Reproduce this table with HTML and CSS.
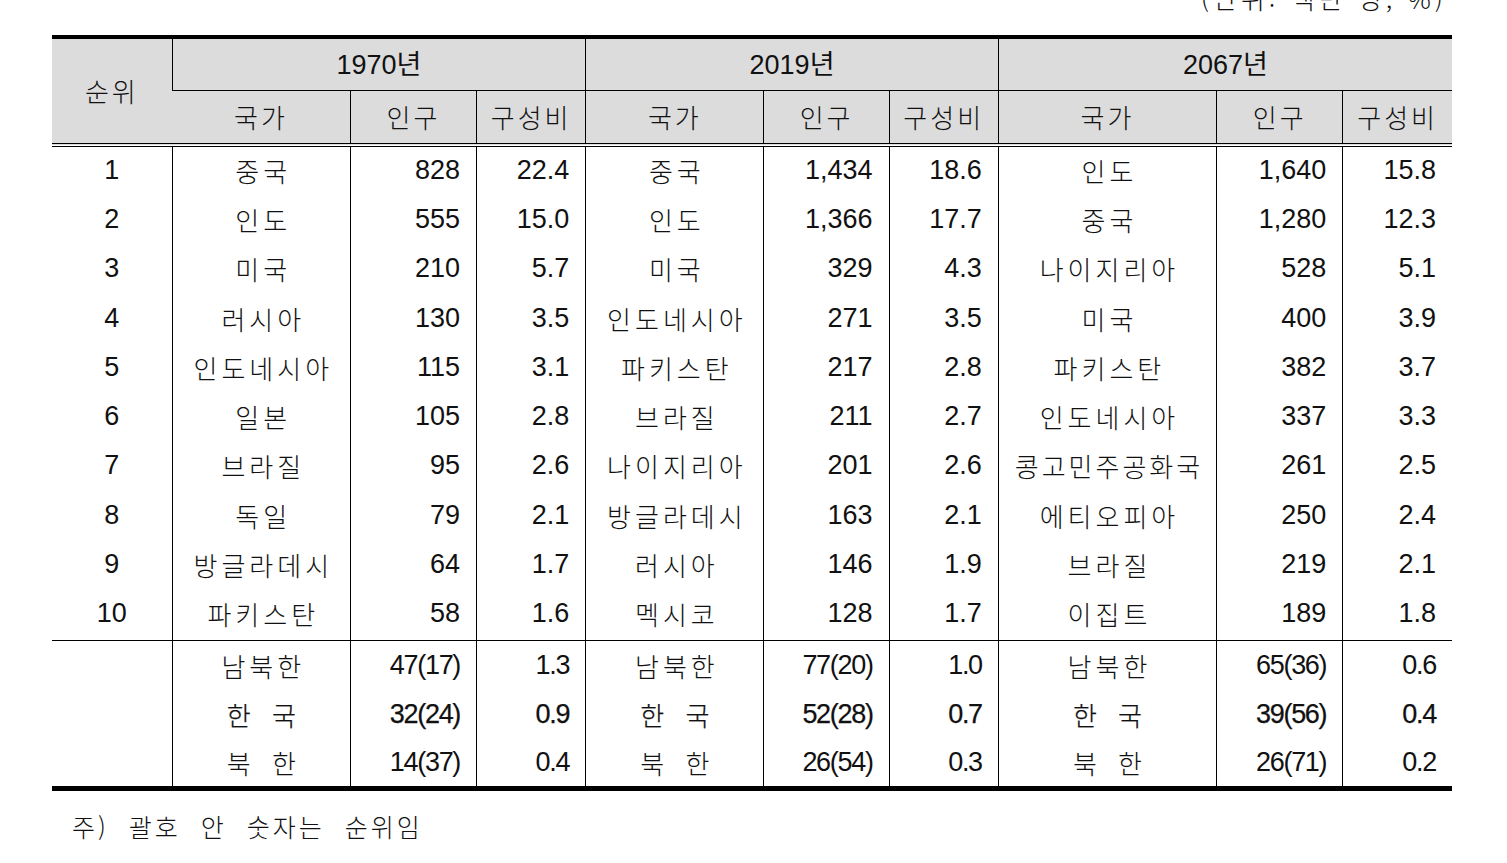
FILE: index.html
```html
<!DOCTYPE html>
<html lang="ko">
<head>
<meta charset="utf-8">
<title>세계 인구 순위</title>
<link rel="stylesheet" href="styles.css">
</head>
<body>
<div class="unit"><span class="unit-text">(단위: 백만 명, %)</span></div>
<table class="pop">
  <colgroup>
    <col class="w-rank"><col class="w-ctry"><col class="w-pop"><col class="w-pct">
    <col class="w-ctry"><col class="w-pop2"><col class="w-pct">
    <col class="w-ctry2"><col class="w-pop"><col class="w-pct">
  </colgroup>
  <thead>
    <tr class="h1">
      <th rowspan="2" class="ko-h">순위</th>
      <th colspan="3">1970년</th>
      <th colspan="3">2019년</th>
      <th colspan="3">2067년</th>
    </tr>
    <tr class="h2">
      <th class="ko-h">국가</th><th class="ko-h">인구</th><th class="ko-h">구성비</th>
      <th class="ko-h">국가</th><th class="ko-h">인구</th><th class="ko-h">구성비</th>
      <th class="ko-h">국가</th><th class="ko-h">인구</th><th class="ko-h">구성비</th>
    </tr>
  </thead>
  <tbody class="main">
    <tr><td class="rank">1</td><td class="ko">중국</td><td class="num">828</td><td class="num">22.4</td><td class="ko">중국</td><td class="num">1,434</td><td class="num">18.6</td><td class="ko">인도</td><td class="num">1,640</td><td class="num">15.8</td></tr>
    <tr><td class="rank">2</td><td class="ko">인도</td><td class="num">555</td><td class="num">15.0</td><td class="ko">인도</td><td class="num">1,366</td><td class="num">17.7</td><td class="ko">중국</td><td class="num">1,280</td><td class="num">12.3</td></tr>
    <tr><td class="rank">3</td><td class="ko">미국</td><td class="num">210</td><td class="num">5.7</td><td class="ko">미국</td><td class="num">329</td><td class="num">4.3</td><td class="ko">나이지리아</td><td class="num">528</td><td class="num">5.1</td></tr>
    <tr><td class="rank">4</td><td class="ko">러시아</td><td class="num">130</td><td class="num">3.5</td><td class="ko">인도네시아</td><td class="num">271</td><td class="num">3.5</td><td class="ko">미국</td><td class="num">400</td><td class="num">3.9</td></tr>
    <tr><td class="rank">5</td><td class="ko">인도네시아</td><td class="num">115</td><td class="num">3.1</td><td class="ko">파키스탄</td><td class="num">217</td><td class="num">2.8</td><td class="ko">파키스탄</td><td class="num">382</td><td class="num">3.7</td></tr>
    <tr><td class="rank">6</td><td class="ko">일본</td><td class="num">105</td><td class="num">2.8</td><td class="ko">브라질</td><td class="num">211</td><td class="num">2.7</td><td class="ko">인도네시아</td><td class="num">337</td><td class="num">3.3</td></tr>
    <tr><td class="rank">7</td><td class="ko">브라질</td><td class="num">95</td><td class="num">2.6</td><td class="ko">나이지리아</td><td class="num">201</td><td class="num">2.6</td><td class="ko tight">콩고민주공화국</td><td class="num">261</td><td class="num">2.5</td></tr>
    <tr><td class="rank">8</td><td class="ko">독일</td><td class="num">79</td><td class="num">2.1</td><td class="ko">방글라데시</td><td class="num">163</td><td class="num">2.1</td><td class="ko">에티오피아</td><td class="num">250</td><td class="num">2.4</td></tr>
    <tr><td class="rank">9</td><td class="ko">방글라데시</td><td class="num">64</td><td class="num">1.7</td><td class="ko">러시아</td><td class="num">146</td><td class="num">1.9</td><td class="ko">브라질</td><td class="num">219</td><td class="num">2.1</td></tr>
    <tr><td class="rank">10</td><td class="ko">파키스탄</td><td class="num">58</td><td class="num">1.6</td><td class="ko">멕시코</td><td class="num">128</td><td class="num">1.7</td><td class="ko">이집트</td><td class="num">189</td><td class="num">1.8</td></tr>
  </tbody>
  <tbody class="korea">
    <tr><td class="rank"></td><td class="ko nk">남북한</td><td class="num cond">47(17)</td><td class="num cond">1.3</td><td class="ko nk">남북한</td><td class="num cond">77(20)</td><td class="num cond">1.0</td><td class="ko nk">남북한</td><td class="num cond">65(36)</td><td class="num cond">0.6</td></tr>
    <tr class="strong"><td class="rank"></td><td class="ko wide">한 국</td><td class="num cond">32(24)</td><td class="num cond">0.9</td><td class="ko wide">한 국</td><td class="num cond">52(28)</td><td class="num cond">0.7</td><td class="ko wide">한 국</td><td class="num cond">39(56)</td><td class="num cond">0.4</td></tr>
    <tr><td class="rank"></td><td class="ko wide">북 한</td><td class="num cond">14(37)</td><td class="num cond">0.4</td><td class="ko wide">북 한</td><td class="num cond">26(54)</td><td class="num cond">0.3</td><td class="ko wide">북 한</td><td class="num cond">26(71)</td><td class="num cond">0.2</td></tr>
  </tbody>
</table>
<p class="note">주) 괄호 안 숫자는 순위임</p>
</body>
</html>
```

FILE: styles.css
```css
html, body {
  margin: 0;
  padding: 0;
  background: #ffffff;
}

body {
  font-family: "Liberation Sans", "Noto Sans CJK KR", sans-serif;
  color: #111111;
  overflow: hidden;
}

.unit {
  display: flow-root;
  height: 35px;
  padding-right: 60px;
  text-align: right;
  font-family: "Noto Sans CJK KR", sans-serif;
  font-size: 26px;
  font-weight: 300;
  letter-spacing: 4px;
}

.unit-text {
  display: block;
  line-height: 20px;
  margin-top: -12px;
}

.pop {
  margin-left: 52px;
  width: 1400px;
  table-layout: fixed;
  border-collapse: collapse;
  border-top: 4px solid #000;
  border-bottom: 5px solid #000;
  font-size: 27px;
}

.w-rank { width: 120px; }
.w-ctry { width: 178px; }
.w-pop { width: 126px; }
.w-pop2 { width: 125px; }
.w-pct { width: 109px; }
.w-ctry2 { width: 218px; }

.pop th,
.pop td {
  padding: 0;
  border-left: 1px solid #000;
  font-weight: normal;
  white-space: nowrap;
}

.pop th:first-child,
.pop td:first-child {
  border-left: none;
}

.pop thead th {
  background: #dcdcdc;
  text-align: center;
}

.h1 th {
  height: 46px;
  border-bottom: 1px solid #000;
  padding-bottom: 5px;
}

.h1 th[rowspan] {
  border-bottom: 4px double #000;
  padding-bottom: 2px;
}

.h2 th {
  height: 50px;
  border-bottom: 4px double #000;
  padding-bottom: 2px;
}

.pop .ko-h {
  font-family: "Noto Sans CJK KR", sans-serif;
  font-size: 26px;
  font-weight: 300;
  letter-spacing: 3px;
}

.main td {
  height: 46.3px;
  padding-bottom: 3px;
}

.main tr:last-child td {
  border-bottom: 1px solid #000;
}

.korea td {
  height: 47.4px;
  padding-top: 1px;
}

.rank {
  text-align: center;
}

.pop .ko {
  text-align: center;
  font-family: "Noto Sans CJK KR", sans-serif;
  font-size: 26px;
  font-weight: 300;
  letter-spacing: 4px;
  padding-left: 4px;
}

.pop .ko.tight {
  letter-spacing: 3px;
  padding-left: 3px;
}

.pop .ko.wide {
  word-spacing: 6px;
}

.pop .num {
  text-align: right;
  padding-right: 16px;
}

.cond {
  letter-spacing: -1.3px;
}

.strong td {
  -webkit-text-stroke: 0.25px #111;
}

.note {
  margin: 20px 0 0 72px;
  font-family: "Noto Sans CJK KR", sans-serif;
  font-size: 25px;
  font-weight: 300;
  line-height: 30px;
  word-spacing: 10px;
  letter-spacing: 3px;
}
```
